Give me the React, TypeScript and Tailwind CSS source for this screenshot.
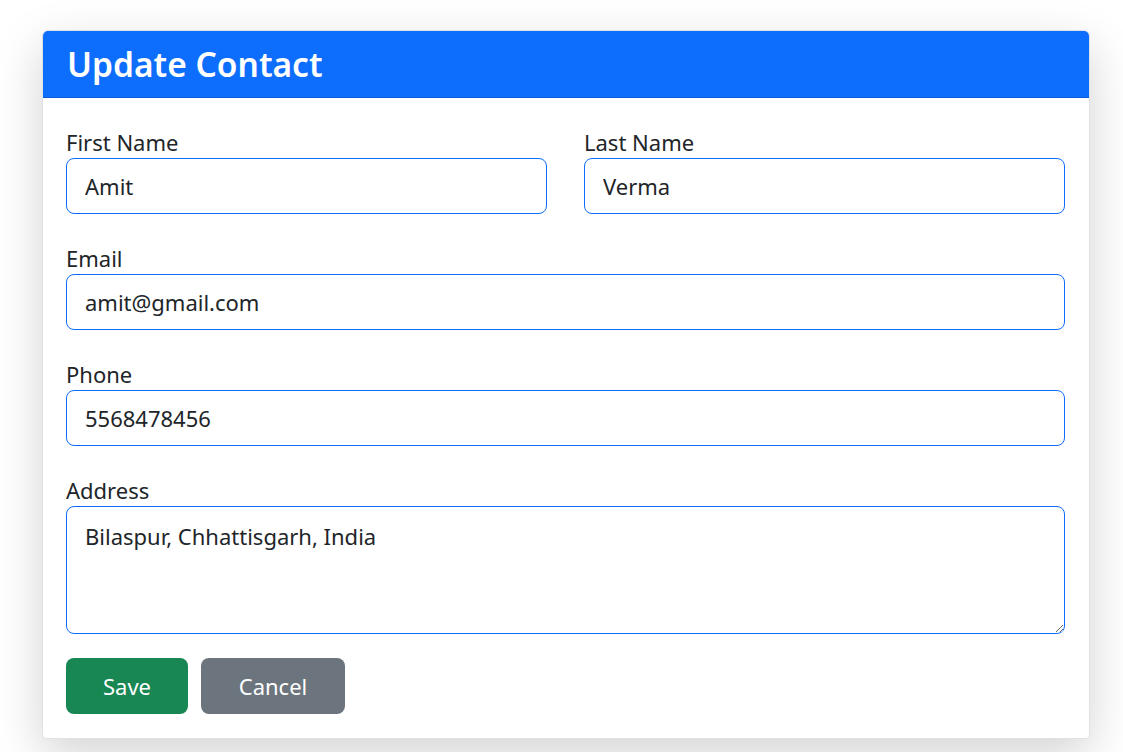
export default function App() {
  return (
    <div
      className="min-h-[752px] bg-white pt-[30px] pl-[42px]"
      style={{ fontFamily: '"Noto Sans", "Open Sans", sans-serif' }}
    >
      <div className="w-[1048px] overflow-hidden rounded-t-[6px] rounded-b-[4px] border border-[#dee2e6] bg-white shadow-[0_16px_48px_rgba(0,0,0,0.175)]">
        {/* header */}
        <div className="flex h-[67px] items-center border-b border-[#0b5ed7] bg-[#0d6efd] pl-[24px] pt-[2px]">
          <h2 className="text-[33.5px] font-semibold leading-none text-white">
            Update Contact
          </h2>
        </div>
        {/* form */}
        <form className="flex flex-col pl-[23px] pr-[24px] pt-[28px] pb-[24px] text-[#212529]">
          <div className="grid grid-cols-2 gap-x-[37px]">
            <Field label="First Name" value="Amit" />
            <Field label="Last Name" value="Verma" />
          </div>
          <Field label="Email" value="amit@gmail.com" />
          <Field label="Phone" value="5568478456" />
          <div className="flex flex-col">
            <label className="text-[22px] leading-[32px]">Address</label>
            <textarea
              defaultValue="Bilaspur, Chhattisgarh, India"
              className="h-[128px] w-full resize-y rounded-[8px] border border-[#0d6efd] px-[18px] py-[14px] text-[22px] leading-[30px] text-[#212529] outline-none"
            />
          </div>
          <div className="mt-[24px] flex gap-[13px]">
            <button
              type="button"
              className="h-[56px] w-[122px] rounded-[8px] bg-[#198754] text-[22px] text-white"
            >
              Save
            </button>
            <button
              type="button"
              className="h-[56px] w-[144px] rounded-[8px] bg-[#6c757d] text-[22px] text-white"
            >
              Cancel
            </button>
          </div>
        </form>
      </div>
    </div>
  );
}

function Field({ label, value }: { label: string; value: string }) {
  return (
    <div className="mb-[28px] flex flex-col">
      <label className="text-[22px] leading-[32px]">{label}</label>
      <input
        type="text"
        defaultValue={value}
        className="h-[56px] w-full rounded-[8px] border border-[#0d6efd] px-[18px] text-[22px] text-[#212529] outline-none"
      />
    </div>
  );
}
